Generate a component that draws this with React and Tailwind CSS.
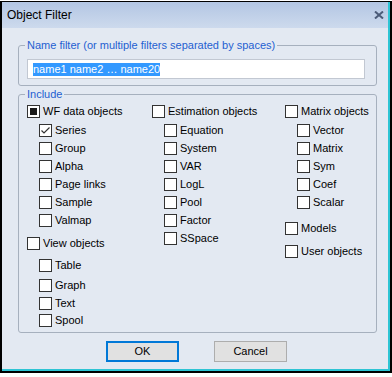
import React from "react";

const font = { fontFamily: '"Liberation Sans", Arial, sans-serif' };

const Box = ({ state }) => (
  <span className="flex items-center justify-center w-[13px] h-[13px] shrink-0 border border-[#333333] bg-white">
    {state === "mixed" && <span className="block w-[7px] h-[7px] bg-[#1a1a1a]" />}
    {state === "checked" && (
      <svg width="11" height="11" viewBox="0 0 11 11">
        <path d="M1.5 5.5 L4 8 L9.5 2.5" fill="none" stroke="#333333" strokeWidth="1.2" />
      </svg>
    )}
  </span>
);

const Check = ({ label, state, sub, className = "" }) => (
  <div className={`flex items-center gap-[3px] h-[18px] ${sub ? "pl-[12px]" : ""} ${className}`}>
    <Box state={state} />
    <span className="text-[11px] leading-[18px] text-black whitespace-nowrap">{label}</span>
  </div>
);

const Legend = ({ children }) => (
  <legend className="px-[2px] text-[11px] leading-[13px] text-[#1f5fd1] whitespace-nowrap">
    {children}
  </legend>
);

export default function App() {
  return (
    <div className="w-[392px] h-[377px] bg-white overflow-hidden" style={font}>
      <div className="mt-[1px] border-t border-l-2 border-r-2 border-b-2 border-black">
        <div className="border-r-2 border-b-2 border-[#2ec4d4] bg-[#e3e9f2]">
          {/* title bar */}
          <div className="flex items-center justify-between h-[26px] pl-[5px] pr-[4px] bg-gradient-to-b from-[#b3c6e3] to-[#cddaed]">
            <span className="text-[12px] text-black">Object Filter</span>
            <svg width="10" height="8" viewBox="0 0 10 8">
              <path d="M1 0.5 L9 7.5 M9 0.5 L1 7.5" stroke="#4b5b78" strokeWidth="2" />
            </svg>
          </div>

          <fieldset className="ml-[16px] mt-[11px] w-[359px] border border-[#a6b0be] rounded-[3px] pl-[6px] pb-[6px]">
            <Legend>Name filter (or multiple filters separated by spaces)</Legend>
            <div className="ml-[2px] mt-[7px] w-[338px] h-[20px] flex items-center pl-[5px] bg-white border border-[#c2c8d2]">
              <span className="bg-[#3399ff] text-white text-[11px] leading-[13px] whitespace-nowrap">
                name1 name2 … name20
              </span>
            </div>
          </fieldset>

          <fieldset className="ml-[16px] mt-[2px] w-[359px] border border-[#a6b0be] rounded-[3px] pl-[6px] pb-[3px]">
            <Legend>Include</Legend>
            <div className="flex pl-[2px] pt-[1px]">
              <div className="flex flex-col w-[125px]">
                <Check label="WF data objects" state="mixed" />
                <Check label="Series" state="checked" sub className="mt-[1px]" />
                <Check label="Group" sub />
                <Check label="Alpha" sub />
                <Check label="Page links" sub />
                <Check label="Sample" sub />
                <Check label="Valmap" sub />
                <Check label="View objects" className="mt-[5px]" />
                <Check label="Table" sub className="mt-[4px]" />
                <Check label="Graph" sub className="mt-[2px]" />
                <Check label="Text" sub />
                <Check label="Spool" sub className="-mt-[1px]" />
              </div>
              <div className="flex flex-col w-[133px]">
                <Check label="Estimation objects" />
                <Check label="Equation" sub className="mt-[1px]" />
                <Check label="System" sub />
                <Check label="VAR" sub />
                <Check label="LogL" sub />
                <Check label="Pool" sub />
                <Check label="Factor" sub />
                <Check label="SSpace" sub />
              </div>
              <div className="flex flex-col">
                <Check label="Matrix objects" />
                <Check label="Vector" sub className="mt-[1px]" />
                <Check label="Matrix" sub />
                <Check label="Sym" sub />
                <Check label="Coef" sub />
                <Check label="Scalar" sub />
                <Check label="Models" className="mt-[8px]" />
                <Check label="User objects" className="mt-[5px]" />
              </div>
            </div>
          </fieldset>

          <div className="flex gap-[35px] pl-[104px] mt-[8px] pb-[7px]">
            <button className="w-[73px] h-[21px] border-2 border-[#0078d7] bg-[#e1e1e1] text-[11px] text-black">
              OK
            </button>
            <button className="w-[73px] h-[21px] border border-[#adadad] bg-[#e1e1e1] text-[11px] text-black">
              Cancel
            </button>
          </div>
        </div>
      </div>
    </div>
  );
}
